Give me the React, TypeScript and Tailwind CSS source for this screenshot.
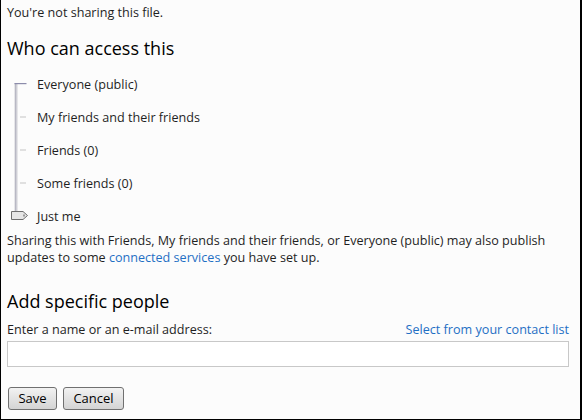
import React from "react";

const levels = [
  "Everyone (public)",
  "My friends and their friends",
  "Friends (0)",
  "Some friends (0)",
  "Just me",
];

function SliderTrack() {
  return (
    <svg width="30" height="165" viewBox="0 0 30 165" className="shrink-0">
      <rect x="13.5" y="15" width="3" height="136" fill="#cfcfd6" />
      <rect x="14" y="15" width="1" height="136" fill="#b8b8c4" />
      <rect x="13.5" y="15" width="12" height="1.2" fill="#8c8cab" />
      <rect x="19" y="48.5" width="6" height="1" fill="#c4c4c4" />
      <rect x="19" y="81.5" width="6" height="1" fill="#c4c4c4" />
      <rect x="19" y="114.5" width="6" height="1" fill="#c4c4c4" />
      <path
        d="M10.5 143.5 H22 L26.5 147.5 L22 151.5 H10.5 Z"
        fill="#e6e6e6"
        stroke="#6e6e6e"
        strokeWidth="1"
      />
      <rect x="22" y="146.5" width="2" height="2" fill="#9a9a9a" />
    </svg>
  );
}

export default function App() {
  return (
    <div
      className="w-[582px] h-[420px] bg-[#fcfcfc] border-l border-r-2 border-b border-black text-[#1f1f1f] text-[12.6px] leading-[17px] overflow-hidden"
      style={{ fontFamily: '"Open Sans", "Noto Sans", sans-serif' }}
    >
      <div className="pl-[6px] pr-[11px] pt-[4px] flex flex-col">
        <p>You're not sharing this file.</p>
        <h2 className="mt-[15px] text-[18px] leading-[24px] text-black">Who can access this</h2>
        <div className="mt-[8px] flex -ml-[6px]">
          <SliderTrack />
          <ul className="flex flex-col pl-[6px]">
            {levels.map((l) => (
              <li key={l} className="h-[33px] flex items-center">
                {l}
              </li>
            ))}
          </ul>
        </div>
        <div className="-mt-[1px] flex flex-col">
          <span>
            Sharing this with Friends, My friends and their friends, or Everyone (public) may also publish
          </span>
          <div className="flex whitespace-pre">
            <span>updates to some </span>
            <a className="text-[#1f6fc4]">connected services</a>
            <span> you have set up.</span>
          </div>
        </div>
        <h2 className="mt-[23px] text-[18px] leading-[24px] text-black">Add specific people</h2>
        <div className="mt-[8px] flex justify-between">
          <span>Enter a name or an e-mail address:</span>
          <a className="text-[#1f6fc4]">Select from your contact list</a>
        </div>
        <input
          type="text"
          className="mt-[3px] h-[26px] w-full bg-white border border-[#c8c8c8] outline-none"
        />
        <div className="mt-[20px] flex gap-[6px] pl-[1px]">
          <button className="w-[49px] h-[23px] rounded-[3px] border border-[#707070] bg-gradient-to-b from-[#f2f2f2] to-[#d4d4d4] text-[13px] leading-[17px] text-black">
            Save
          </button>
          <button className="w-[61px] h-[23px] rounded-[3px] border border-[#707070] bg-gradient-to-b from-[#f2f2f2] to-[#d4d4d4] text-[13px] leading-[17px] text-black">
            Cancel
          </button>
        </div>
      </div>
    </div>
  );
}
